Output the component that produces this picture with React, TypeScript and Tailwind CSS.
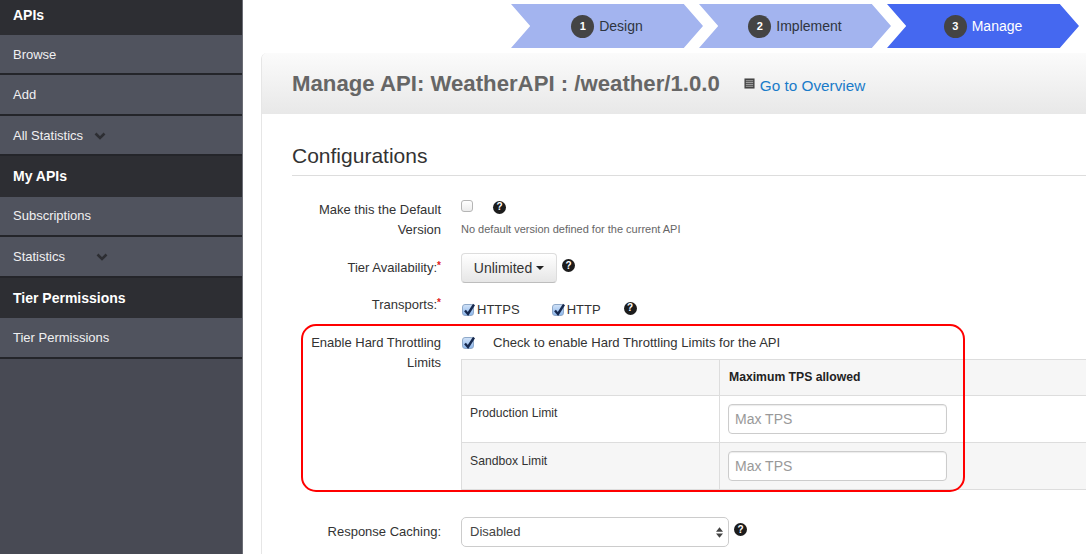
const sideItems = [
  { label: 'APIs', head: true, h: 'h-[35px] pb-[4px]' },
  { label: 'Browse', h: 'h-[40px] pt-[1px]' },
  { label: 'Add', h: 'h-[41px]' },
  { label: 'All Statistics', chevron: 'ml-[11px]', h: 'h-[40px] pt-[1px]' },
  { label: 'My APIs', head: true, h: 'h-[41px]' },
  { label: 'Subscriptions', h: 'h-[40px]' },
  { label: 'Statistics', chevron: 'ml-[31px]', h: 'h-[41px]' },
  { label: 'Tier Permissions', head: true, h: 'h-[40px]' },
  { label: 'Tier Permissions', h: 'h-[41px]' },
]

const steps = [
  { n: 1, label: 'Design', active: false, ml: '' },
  { n: 2, label: 'Implement', active: false, ml: '-ml-[4px]' },
  { n: 3, label: 'Manage', active: true, ml: '-ml-[4px]' },
]

function Sidebar() {
  return (
    <aside className="w-[243px] h-full flex-shrink-0 bg-[#484a54] border-r border-[#6b6d75]">
      {sideItems.map((item, i) =>
        item.head ? (
          <div
            key={i}
            className={`${item.h} bg-[#2d2e33] text-white font-bold text-[14px] px-[13px] flex items-center`}
          >
            {item.label}
          </div>
        ) : (
          <div
            key={i}
            className={`${item.h} bg-[#50535e] border-b-2 border-[#24252a] text-[#f0f0f2] text-[13px] px-[13px] flex items-center`}
          >
            {item.label}
            {item.chevron && (
              <svg viewBox="0 0 12 8" className={`${item.chevron} w-[12px] h-[8px]`}>
                <path d="M1.5 1.5 6 6l4.5-4.5" fill="none" stroke="#2d2e33" strokeWidth="2.6" />
              </svg>
            )}
          </div>
        ),
      )}
    </aside>
  )
}

function Step({ n, label, active, ml }: { n: number; label: string; active: boolean; ml: string }) {
  return (
    <div
      className={`${ml} w-[192px] h-[44px] flex items-center justify-center gap-[5px] text-[14px] [clip-path:polygon(0_0,90%_0,100%_50%,90%_100%,0_100%,10%_50%)] ${
        active ? 'bg-[#4568f0] text-white' : 'bg-[#a3b4ef] text-[#2f3440]'
      }`}
    >
      <span className="w-[23px] h-[23px] rounded-full bg-[#444444] text-white font-bold text-[11px] flex items-center justify-center">
        {n}
      </span>
      {label}
    </div>
  )
}

// round help badge, the question mark is a real glyph
function Help({ className = '' }: { className?: string }) {
  return (
    <span
      className={`w-[13px] h-[13px] rounded-full bg-[#1c1c1c] text-white font-bold text-[10px] leading-none flex items-center justify-center flex-shrink-0 ${className}`}
    >
      ?
    </span>
  )
}

function Check({ on = true }: { on?: boolean }) {
  if (!on) {
    return <span className="block w-[12px] h-[12px] rounded-[3px] border border-[#b5b5b5] bg-gradient-to-b from-white to-[#ececec]" />
  }
  return (
    <span className="relative block ml-[1px] w-[12px] h-[12px] rounded-[3px] border border-[#8fa9c9] bg-gradient-to-b from-[#cfe1f7] to-[#8fb8ec]">
      <svg viewBox="0 0 14 14" className="absolute -top-[2px] -left-[1px] w-[14px] h-[14px]">
        <path d="M3 7.5 6 11 12 1.5" fill="none" stroke="#16294f" strokeWidth="2.4" />
      </svg>
    </span>
  )
}

function LimitInput() {
  return (
    <input
      placeholder="Max TPS"
      className="block w-[219px] h-[30px] rounded-[4px] border border-[#cccccc] bg-white px-[6px] text-[14px] placeholder:text-[#999999] shadow-[inset_0_1px_1px_rgba(0,0,0,0.08)]"
    />
  )
}

function Label({ children, className = '' }: { children: React.ReactNode; className?: string }) {
  return <div className={`w-[149px] flex-shrink-0 text-right text-[13px] leading-[20px] text-[#333333] ${className}`}>{children}</div>
}

function Required() {
  return <span className="text-[#e02020] align-[3px] text-[10px] font-bold leading-none">*</span>
}

export default function App() {
  return (
    <div className="relative w-[1086px] h-[554px] overflow-hidden bg-white flex font-['Liberation_Sans',Arial,sans-serif] text-[#333333]">
      <Sidebar />

      <main className="flex-1 min-w-0">
        <div className="flex pl-[268px] pt-[4px] h-[53px]">
          {steps.map((s) => (
            <Step key={s.n} {...s} />
          ))}
        </div>

        <section className="ml-[18px] h-[501px] rounded-tl-[6px] border-l border-[#e6e6e6] overflow-hidden">
          <header className="h-[61px] bg-gradient-to-b from-[#fbfbfb] to-[#e8e8e8] pl-[30px] flex items-center">
            <h1 className="text-[22.2px] font-bold text-[#666666] whitespace-nowrap">Manage API: WeatherAPI : /weather/1.0.0</h1>
            <svg viewBox="0 0 12 12" className="ml-[24px] mb-[1px] w-[11px] h-[11px] flex-shrink-0">
              <rect x="0.5" y="0.5" width="11" height="11" fill="#444444" />
              <path d="M2 3h8M2 5h8M2 7h8M2 9h8" stroke="#c8c8c8" strokeWidth="0.8" />
            </svg>
            <a className="ml-[5px] pt-[6px] text-[15.3px] text-[#1a7bc9] whitespace-nowrap">Go to Overview</a>
          </header>

          <div className="pl-[30px]">
            <h2 className="mt-[28px] h-[34px] pt-[1px] border-b border-[#dddddd] text-[21px] leading-[26px] text-[#333333]">Configurations</h2>

            <div className="mt-[23px] flex">
              <Label className="mt-[1px]">Make this the Default Version</Label>
              <div className="ml-[20px]">
                <div className="flex items-center h-[14px]">
                  <Check on={false} />
                  <Help className="ml-[20px] mt-[2px]" />
                </div>
                <p className="mt-[9px] text-[11px] leading-[14px] text-[#666666]">No default version defined for the current API</p>
              </div>
            </div>

            <div className="mt-[13px] flex items-center h-[30px]">
              <Label>
                Tier Availability:<Required />
              </Label>
              <div className="ml-[20px] flex items-start">
                <button className="w-[96px] h-[30px] rounded-[4px] border border-[#dddddd] border-b-[#bdbdbd] bg-gradient-to-b from-white to-[#e6e6e6] text-[14px] flex items-center justify-center gap-[4px]">
                  Unlimited
                  <span className="w-0 h-0 border-x-[4px] border-x-transparent border-t-[4px] border-t-[#222222]" />
                </button>
                <Help className="ml-[5px] mt-[6px]" />
              </div>
            </div>

            <div className="mt-[10px] flex items-start h-[30px]">
              <Label className="mt-[2px]">
                Transports:<Required />
              </Label>
              <div className="ml-[20px] mt-[6px] flex items-center h-[22px] text-[13px]">
                <Check />
                <span className="ml-[3px]">HTTPS</span>
                <span className="ml-[31px]">
                  <Check />
                </span>
                <span className="ml-[3px]">HTTP</span>
                <Help className="ml-[23px] -mt-[4px]" />
              </div>
            </div>

            <div className="flex mt-[10px]">
              <Label>Enable Hard Throttling Limits</Label>
              <div className="ml-[20px] flex-1 min-w-0">
                <div className="flex items-center h-[20px] text-[13.1px]">
                  <Check />
                  <span className="ml-[19px] whitespace-nowrap">Check to enable Hard Throttling Limits for the API</span>
                </div>
                <table className="mt-[6px] w-[640px] border-collapse text-[12.2px]">
                  <tbody>
                    <tr className="h-[36px] bg-[#f6f6f6] border-y border-[#dddddd]">
                      <td className="w-[258px] border-l border-r border-[#dddddd]" />
                      <td className="pl-[9px] font-bold text-[#222222]">Maximum TPS allowed</td>
                    </tr>
                    <tr className="h-[47px] bg-white border-b border-[#dddddd]">
                      <td className="border-l border-r border-[#dddddd] pl-[8px] pb-[12px]">Production Limit</td>
                      <td className="pl-[8px]">
                        <LimitInput />
                      </td>
                    </tr>
                    <tr className="h-[47px] bg-[#f6f6f6] border-b border-[#dddddd]">
                      <td className="border-l border-r border-[#dddddd] pl-[8px] pb-[9px]">Sandbox Limit</td>
                      <td className="pl-[8px]">
                        <LimitInput />
                      </td>
                    </tr>
                  </tbody>
                </table>
              </div>
            </div>

            <div className="mt-[27px] flex items-center">
              <Label>Response Caching:</Label>
              <div className="ml-[20px] flex items-start">
                <div className="w-[268px] h-[30px] rounded-[5px] border border-[#cccccc] bg-white pl-[8px] pr-[5px] flex items-center justify-between text-[13px] text-[#444444]">
                  Disabled
                  <svg viewBox="0 0 8 12" className="w-[7px] h-[11px]">
                    <path d="M4 0 8 5H0ZM4 12 0 7h8Z" fill="#444444" />
                  </svg>
                </div>
                <Help className="ml-[5px] mt-[6px]" />
              </div>
            </div>
          </div>
        </section>
      </main>

      <div className="absolute left-[301px] top-[324px] w-[664px] h-[168px] rounded-[15px] border-2 border-[#ff0000] pointer-events-none" />
    </div>
  )
}
